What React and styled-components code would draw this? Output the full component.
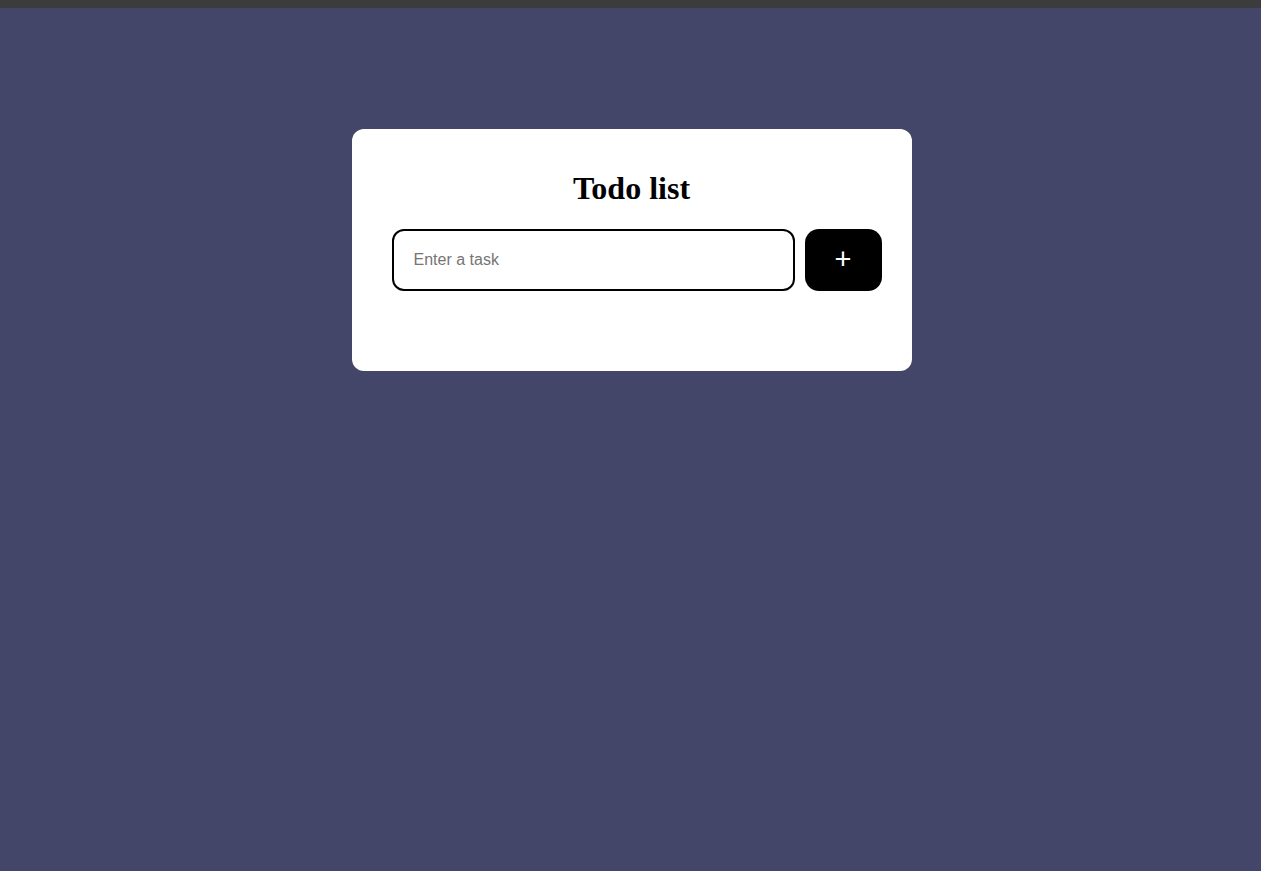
import React from 'react'
import styled, { createGlobalStyle } from 'styled-components'

const GlobalStyle = createGlobalStyle`
  html, body {
    margin: 0;
    padding: 0;
    background: #434669;
  }
  body {
    min-height: 871px;
  }
`

const TopStrip = styled.div`
  height: 8px;
  background: #3c3c3c;
`

const Page = styled.div`
  display: flex;
  justify-content: center;
  padding: 121px 0 0 2px;
`

const Card = styled.div`
  width: 560px;
  box-sizing: border-box;
  background: #fff;
  border-radius: 12px;
  padding: 41px 0 80px;
`

const Title = styled.h1`
  margin: 0 0 23px 0;
  font-family: 'Liberation Serif', 'Times New Roman', serif;
  font-weight: 700;
  font-size: 32px;
  line-height: 36px;
  text-align: center;
  color: #000;
`

const Row = styled.form`
  display: flex;
  gap: 10px;
  margin: 0;
  padding-left: 40px;
`

const TaskInput = styled.input`
  width: 403px;
  height: 62px;
  box-sizing: border-box;
  border: 2px solid #000;
  border-radius: 12px;
  padding: 0 20px;
  font-family: 'Liberation Sans', Arial, sans-serif;
  font-size: 16px;
  color: #000;
  outline: none;

  &::placeholder {
    color: #757575;
  }
`

const AddButton = styled.button`
  width: 77px;
  height: 62px;
  border: none;
  border-radius: 14px;
  background: #000;
  color: #fff;
  font-family: 'Liberation Sans', Arial, sans-serif;
  font-size: 29px;
  line-height: 1;
  display: flex;
  align-items: center;
  justify-content: center;
  cursor: pointer;
  padding: 0 0 2px;
`

const App = () => {
  const [task, setTask] = React.useState('')

  return (
    <>
      <GlobalStyle />
      <TopStrip />
      <Page>
        <Card>
          <Title>Todo list</Title>
          <Row onSubmit={(e) => e.preventDefault()}>
            <TaskInput
              placeholder='Enter a task'
              value={task}
              onChange={(e) => setTask(e.target.value)}
            />
            <AddButton type='submit'>+</AddButton>
          </Row>
        </Card>
      </Page>
    </>
  )
}

export default App
